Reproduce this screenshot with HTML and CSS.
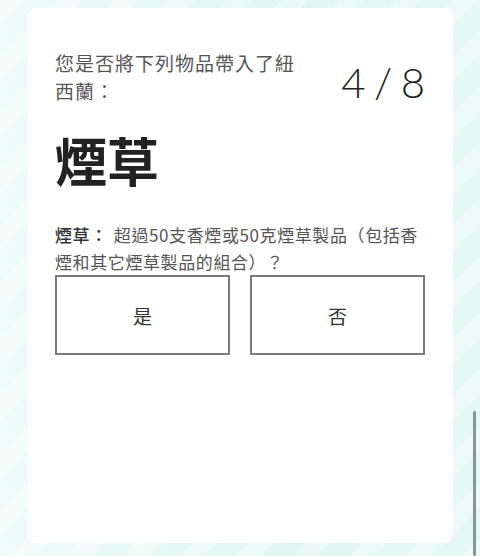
FILE: index.html
```html
<!DOCTYPE html>
<html lang="zh-Hant">
<head>
    <meta charset="UTF-8">
    <meta name="viewport" content="width=device-width, initial-scale=1.0">
    <title>入境申報</title>
    <link rel="stylesheet" href="styles.css">
</head>
<body>
    <div class="card">
        <div class="card-top">
            <p class="question">您是否將下列物品帶入了紐西蘭：</p>
            <div class="counter">4 / 8</div>
        </div>
        <h1 class="item">煙草</h1>
        <p class="desc"><b>煙草：</b><span>超過50支香煙或50克煙草製品（包括香煙和其它煙草製品的組合）？</span></p>
        <div class="answers">
            <button class="answer">是</button>
            <button class="answer">否</button>
        </div>
    </div>
    <div class="scrollbar"></div>
</body>
</html>
```

FILE: styles.css
```css
*
{
    box-sizing: border-box;
}
body
{
    margin: 0;
    height: 556px;
    overflow: hidden;
    font-family: "Noto Sans CJK TC", "Noto Sans", sans-serif;
    background-color: #e3f7f2;
    background-image:
        repeating-linear-gradient(135deg, rgba(255,255,255,0.35) 0 18px, rgba(255,255,255,0) 18px 40px),
        linear-gradient(90deg, #effcf9 0%, #e2f6f1 60%, #e6f8f4 100%);
}
.card
{
    margin: 8px 0 0 28px;
    width: 425px;
    height: 535px;
    background: #fff;
    border-radius: 8px;
    padding: 41px 28px 0 27px;
}
.card-top
{
    display: flex;
    justify-content: space-between;
    align-items: flex-start;
}
.question
{
    margin: 0;
    width: 250px;
    font-size: 19px;
    letter-spacing: 1px;
    line-height: 28px;
    color: #555;
}
.counter
{
    font-family: Lato, "Open Sans", sans-serif;
    font-weight: 300;
    font-size: 42px;
    line-height: 44px;
    margin-top: 11px;
    color: #222;
    word-spacing: -3px;
}
.item
{
    margin: 24px 0 0;
    font-size: 52px;
    line-height: 62px;
    font-weight: 700;
    color: #222;
}
.desc
{
    margin: 30px 0 0;
    font-size: 17px;
    letter-spacing: 0.6px;
    line-height: 27px;
    color: #555;
}
.desc b
{
    display: inline-block;
    font-weight: 500;
    color: #333;
    margin-right: 6px;
}
.answers
{
    display: flex;
    gap: 20px;
}
.answer
{
    flex: 1;
    height: 80px;
    background: #fff;
    border: 2px solid #7a7a7a;
    font-family: inherit;
    font-size: 19px;
    color: #333;
    cursor: pointer;
}
.scrollbar
{
    position: absolute;
    left: 473px;
    top: 411px;
    width: 3px;
    height: 145px;
    background: #8a9592;
    border-radius: 2px;
}
```
